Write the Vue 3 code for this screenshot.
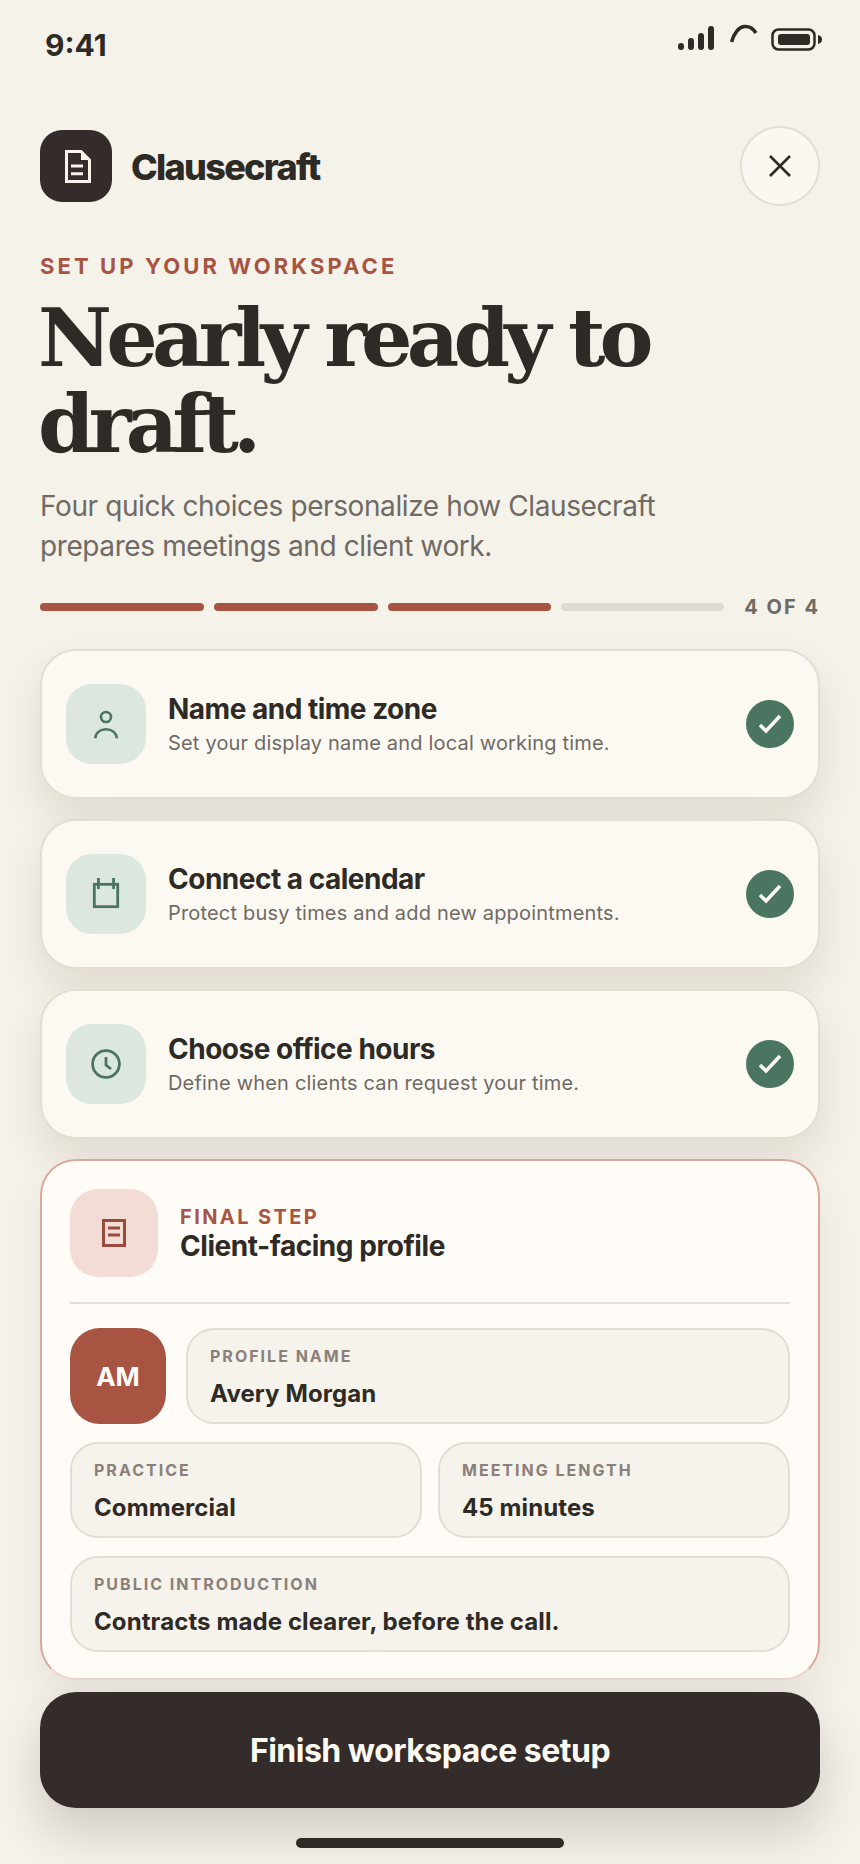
<script setup>
const steps = [
  { id: 'user', title: 'Name and time zone', sub: 'Set your display name and local working time.' },
  { id: 'cal', title: 'Connect a calendar', sub: 'Protect busy times and add new appointments.' },
  { id: 'clock', title: 'Choose office hours', sub: 'Define when clients can request your time.' }
]
</script>

<template>
  <div class="screen">
    <div class="status">
      <span class="time">9:41</span>
      <div class="status-icons">
        <svg width="36" height="24" viewBox="0 0 36 24" class="signal">
          <rect x="0" y="17" width="6" height="7" rx="3" />
          <rect x="10" y="12" width="6" height="12" rx="3" />
          <rect x="20" y="7" width="6" height="17" rx="3" />
          <rect x="30" y="0" width="6" height="24" rx="3" />
        </svg>
        <svg width="28" height="20" viewBox="0 0 28 20" class="wifi">
          <path d="M1.500 18C4 9 9 3 14 2.500c5-.5 9 1.500 12 6.500" fill="none" stroke="#2e2a26" stroke-width="3.500" />
        </svg>
        <svg width="52" height="24" viewBox="0 0 52 24" class="battery">
          <rect x="1.500" y="1.500" width="42" height="20" rx="6" fill="none" stroke="#2e2a26" stroke-width="2.500" />
          <rect x="7" y="6" width="32" height="11" rx="3" fill="#2e2a26" />
          <path d="M47 7c3 .5 4 2.500 4 4.500s-1 4-4 4.500z" fill="#2e2a26" />
        </svg>
      </div>
    </div>

    <header class="brand-row">
      <div class="brand">
        <div class="logo">
          <svg class="logo-doc" width="26" height="33" viewBox="0 0 26 33">
            <path d="M1.500 1.500H16L24.500 10V31.500H1.500Z" fill="none" stroke="#f8f4ec" stroke-width="3" />
            <path d="M16 1.500L24.500 10H16Z" fill="#f8f4ec" />
            <path d="M6 16h12M6 23.700h12" stroke="#f8f4ec" stroke-width="3" />
          </svg>
        </div>
        <span class="brand-name">Clausecraft</span>
      </div>
      <button class="close" aria-label="Close">
        <svg width="26" height="26" viewBox="0 0 26 26">
          <path d="M3 3l20 20M23 3L3 23" stroke="#2e2a26" stroke-width="2.600" fill="none" />
        </svg>
      </button>
    </header>

    <p class="eyebrow">SET UP YOUR WORKSPACE</p>
    <h1 class="headline">Nearly ready to<br />draft.</h1>
    <p class="intro">Four quick choices personalize how Clausecraft<br />prepares meetings and client work.</p>

    <div class="progress">
      <span class="seg on"></span>
      <span class="seg on"></span>
      <span class="seg on"></span>
      <span class="seg"></span>
      <span class="count">4 OF 4</span>
    </div>

    <div class="steps">
      <div v-for="s in steps" :key="s.id" class="step">
        <div class="step-icon">
          <svg v-if="s.id === 'user'" width="32" height="32" viewBox="0 0 32 32" fill="none" stroke="#4a7561" stroke-width="2.600">
            <circle cx="16" cy="9" r="5" />
            <path d="M5.200 30.300C6 24.500 10.500 21.300 16 21.300s10 3.200 11 9" />
          </svg>
          <svg v-else-if="s.id === 'cal'" width="32" height="32" viewBox="0 0 32 32" fill="none" stroke="#4a7561" stroke-width="2.800">
            <rect x="4.300" y="6.300" width="23.400" height="22.400" />
            <path d="M8.400 0v11M23.600 0v11" />
          </svg>
          <svg v-else width="32" height="32" viewBox="0 0 32 32" fill="none" stroke="#4a7561" stroke-width="2.800">
            <circle cx="16" cy="16" r="13.400" />
            <path d="M16 9v8l5 4" />
          </svg>
        </div>
        <div class="step-text">
          <div class="step-title">{{ s.title }}</div>
          <div class="step-sub">{{ s.sub }}</div>
        </div>
        <div class="check">
          <svg width="48" height="48" viewBox="0 0 48 48" fill="none" stroke="#fdfaf4" stroke-width="3.600">
            <path d="M14 25l6 6L34 16" />
          </svg>
        </div>
      </div>

      <section class="final">
        <div class="final-head">
          <div class="final-icon">
            <svg width="24" height="28" viewBox="0 0 24 28" fill="none" stroke="#9a4a3a" stroke-width="3">
              <rect x="1.500" y="1.500" width="21" height="25" />
              <path d="M6 9h12M6 16h12" />
            </svg>
          </div>
          <div class="final-text">
            <div class="final-label">FINAL STEP</div>
            <div class="final-title">Client-facing profile</div>
          </div>
        </div>
        <div class="fields">
          <div class="name-row">
            <div class="avatar">AM</div>
            <div class="field grow">
              <div class="field-label">PROFILE NAME</div>
              <div class="field-value">Avery Morgan</div>
            </div>
          </div>
          <div class="pair">
            <div class="field">
              <div class="field-label">PRACTICE</div>
              <div class="field-value">Commercial</div>
            </div>
            <div class="field">
              <div class="field-label">MEETING LENGTH</div>
              <div class="field-value">45 minutes</div>
            </div>
          </div>
          <div class="field">
            <div class="field-label">PUBLIC INTRODUCTION</div>
            <div class="field-value">Contracts made clearer, before the call.</div>
          </div>
        </div>
      </section>
    </div>

    <button class="cta">Finish workspace setup</button>
    <div class="home"></div>
  </div>
</template>

<style>
html, body { margin: 0; background: #f5f2ea; }
</style>

<style scoped>
.screen {
  width: 860px;
  height: 1864px;
  box-sizing: border-box;
  padding: 0 40px;
  background: #f5f2ea;
  color: #2e2a26;
  font-family: Inter, "Liberation Sans", sans-serif;
  overflow: hidden;
  display: flex;
  flex-direction: column;
}
.status {
  height: 78px;
  padding: 0 0 0 5px;
  display: flex;
  justify-content: space-between;
  align-items: flex-start;
  flex: none;
}
.time {
  margin-top: 27px;
  font-size: 30px;
  line-height: 36px;
  font-weight: 700;
}
.status-icons {
  display: flex;
  align-items: flex-start;
  margin-right: -3px;
}
.signal { fill: #2e2a26; margin: 26px 16px 0 0; }
.wifi { margin: 24px 13px 0 0; }
.battery { margin-top: 28px; }
.brand-row {
  margin-top: 49px;
  height: 78px;
  display: flex;
  align-items: center;
  justify-content: space-between;
  flex: none;
}
.brand { display: flex; align-items: center; gap: 19px; }
.logo {
  width: 72px;
  height: 72px;
  border-radius: 22px;
  background: #342b2b;
  display: flex;
  align-items: center;
  justify-content: center;
}
.logo-doc { margin-left: 4px; }
.brand-name {
  font-size: 36px;
  line-height: 44px;
  padding-top: 2px;
  font-weight: 800;
  letter-spacing: -1.7px;
}
.close {
  width: 80px;
  height: 80px;
  border-radius: 50%;
  border: 2px solid #e4ddd3;
  background: #fbf8f2;
  padding: 0;
  display: flex;
  align-items: center;
  justify-content: center;
}
.eyebrow {
  margin: 47px 0 0;
  font-size: 22px;
  line-height: 28px;
  font-weight: 700;
  letter-spacing: 3.1px;
  color: #a85442;
}
.headline {
  margin: 15px 0 0 -2px;
  font-family: "DejaVu Serif", serif;
  font-size: 81px;
  line-height: 86px;
  font-weight: 700;
  letter-spacing: -5.8px;
}
.intro {
  margin: 19px 0 0;
  font-size: 28px;
  line-height: 40px;
  letter-spacing: -0.4px;
  color: #6f6a64;
}
.progress {
  margin-top: 29px;
  height: 24px;
  display: flex;
  align-items: center;
  gap: 10px;
  flex: none;
}
.seg {
  width: 164px;
  height: 8px;
  border-radius: 4px;
  background: #dfdad3;
}
.seg.on { background: #a85442; }
.seg:nth-child(4) { width: 163px; }
.count {
  margin-left: 10px;
  font-size: 20px;
  font-weight: 700;
  letter-spacing: 2px;
  color: #6f6a64;
  white-space: nowrap;
}
.steps {
  margin-top: 30px;
  display: flex;
  flex-direction: column;
  gap: 20px;
  flex: none;
}
.step {
  height: 150px;
  box-sizing: border-box;
  padding: 0 24px;
  border: 2px solid #e4ddd3;
  border-radius: 36px;
  background: #fcf9f3;
  box-shadow: 0 20px 40px rgba(70, 50, 35, 0.12);
  display: flex;
  align-items: center;
}
.step-icon {
  width: 80px;
  height: 80px;
  border-radius: 26px;
  background: #dce7e0;
  display: flex;
  align-items: center;
  justify-content: center;
  flex: none;
}
.step-text { margin-left: 22px; flex: 1; }
.step-title {
  font-size: 28px;
  line-height: 34px;
  font-weight: 700;
  letter-spacing: -0.5px;
}
.step-sub {
  margin-top: 3px;
  font-size: 20px;
  line-height: 28px;
  letter-spacing: 0.18px;
  color: #6f6a64;
}
.check {
  width: 48px;
  height: 48px;
  border-radius: 50%;
  background: #4a7561;
  display: flex;
  align-items: center;
  justify-content: center;
  flex: none;
}
.final {
  box-sizing: border-box;
  height: 521px;
  padding: 28px 28px 0;
  border: 2px solid #d9a99c;
  border-bottom-color: #ecd6ce;
  border-radius: 36px;
  background: #fffbf6;
  box-shadow: 0 20px 40px rgba(70, 50, 35, 0.08);
}
.final-head {
  display: flex;
  align-items: center;
  gap: 22px;
  padding-bottom: 25px;
  border-bottom: 2px solid #e4ddd3;
}
.final-text { padding-top: 2px; }
.final-icon {
  width: 88px;
  height: 88px;
  border-radius: 28px;
  background: #f2dcd5;
  display: flex;
  align-items: center;
  justify-content: center;
}
.final-label {
  font-size: 20px;
  line-height: 24px;
  font-weight: 700;
  letter-spacing: 2.4px;
  color: #a85442;
}
.final-title {
  font-size: 28px;
  line-height: 34px;
  font-weight: 700;
  letter-spacing: -0.45px;
}
.fields {
  margin-top: 24px;
  display: flex;
  flex-direction: column;
  gap: 18px;
}
.name-row { display: flex; gap: 20px; }
.avatar {
  width: 96px;
  height: 96px;
  flex: none;
  border-radius: 30px;
  background: #a85442;
  color: #fffbf6;
  font-size: 26px;
  font-weight: 700;
  display: flex;
  align-items: center;
  justify-content: center;
}
.pair { display: grid; grid-template-columns: 1fr 1fr; gap: 16px; }
.field {
  height: 96px;
  box-sizing: border-box;
  padding: 14px 22px 0;
  border: 2px solid #e4ddd3;
  border-radius: 28px;
  background: #f6f2ec;
}
.field.grow { flex: 1; }
.field-label {
  font-size: 16px;
  line-height: 24px;
  font-weight: 700;
  letter-spacing: 2px;
  color: #8a8079;
}
.field-value {
  margin-top: 10px;
  font-size: 24px;
  line-height: 32px;
  font-weight: 700;
  letter-spacing: 0.1px;
}
.cta {
  margin-top: 12px;
  width: 780px;
  height: 116px;
  flex: none;
  border: 0;
  border-radius: 36px;
  background: #342b2b;
  color: #fdfaf4;
  font-family: inherit;
  font-size: 32px;
  font-weight: 700;
  letter-spacing: -0.5px;
  box-shadow: 0 24px 48px rgba(60, 45, 35, 0.2);
}
.home {
  width: 268px;
  height: 10px;
  margin: 30px auto 0;
  border-radius: 5px;
  background: #2e2a26;
  flex: none;
}
</style>
